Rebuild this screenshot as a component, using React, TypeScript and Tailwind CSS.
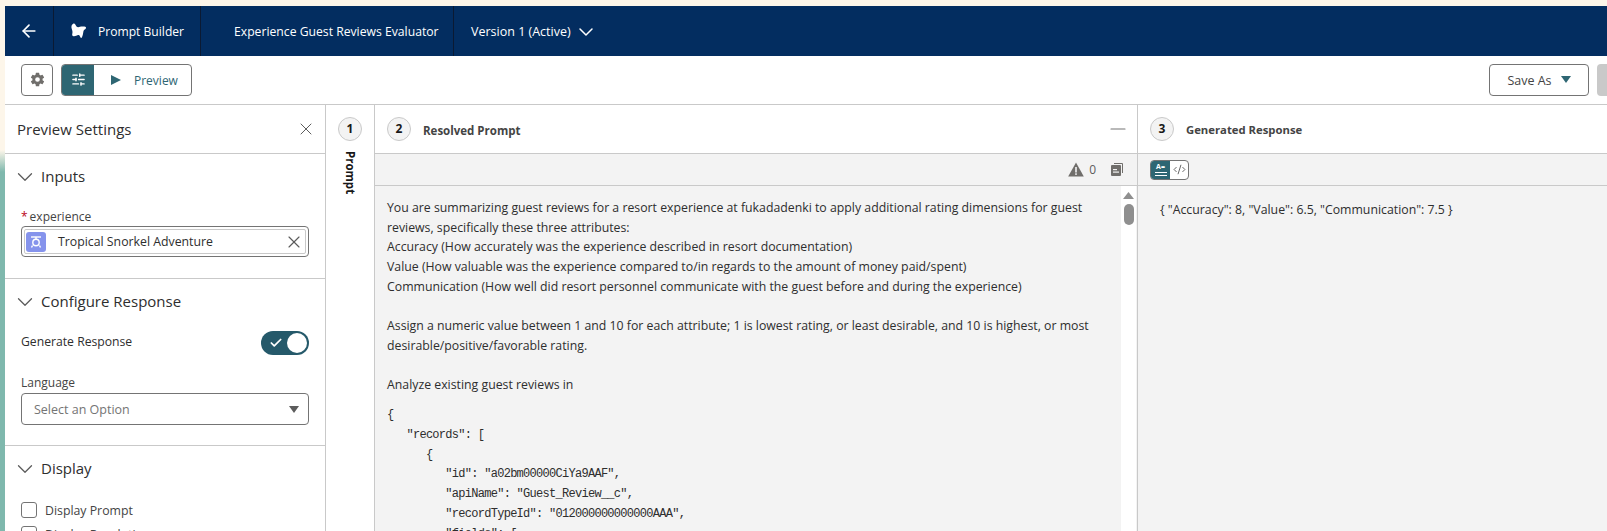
import { ArrowLeft, ChevronDown, Check, X, Minus, SlidersHorizontal, CodeXml } from "lucide-react";
import { IoSettingsSharp } from "react-icons/io5";

const FONT = "font-['Open_Sans','Noto_Sans',sans-serif]";

const PROMPT_TEXT = `You are summarizing guest reviews for a resort experience at fukadadenki to apply additional rating dimensions for guest
reviews, specifically these three attributes:
Accuracy (How accurately was the experience described in resort documentation)
Value (How valuable was the experience compared to/in regards to the amount of money paid/spent)
Communication (How well did resort personnel communicate with the guest before and during the experience)

Assign a numeric value between 1 and 10 for each attribute; 1 is lowest rating, or least desirable, and 10 is highest, or most
desirable/positive/favorable rating.

Analyze existing guest reviews in`;

const PROMPT_JSON = `{
   "records": [
      {
         "id": "a02bm00000CiYa9AAF",
         "apiName": "Guest_Review__c",
         "recordTypeId": "012000000000000AAA",
         "fields": [`;

function SectionHeader({ title }: { title: string }) {
  return (
    <div className="h-[47px] flex items-center pl-[7px] pb-[2px] gap-[3px]">
      <ChevronDown size={26} strokeWidth={1.2} className="text-[#5c5c5c]" />
      <span className="text-[15px] text-[#2e2e2e]">{title}</span>
    </div>
  );
}

function StepBadge({ n }: { n: number }) {
  return (
    <div className="w-6 h-6 rounded-full bg-[#f3f3f3] border border-[#c9c9c9] flex items-center justify-center text-[12px] font-bold text-[#181818] shrink-0">
      {n}
    </div>
  );
}

function CheckRow({ label }: { label: string }) {
  return (
    <div className="flex items-center gap-2 mb-2 h-4">
      <div className="w-4 h-4 rounded-[3px] border border-[#747474] bg-white shrink-0" />
      <span className="pt-[2px] text-[12.3px] text-[#444]">{label}</span>
    </div>
  );
}

function Logo() {
  return (
    <svg width="17" height="16" viewBox="0 0 17 16" fill="white">
      <path d="M3.5 .5 C5 0 5.5 2 6.5 3.5 C8 5 10 3.5 12 3.5 C13.5 3.2 16.5 3.5 16 5 C15.5 6.5 14 6.5 13.5 8 C13 10 13 13 11.5 15 C10.5 15.5 10 12.5 9 12 C7 11.5 5 14 3 13 C1.5 12.5 2.5 10.5 2.5 9 C2.5 7 1 5 1.5 3 C1.7 2 2.8 1 3.5 .5 Z" />
    </svg>
  );
}

function WarningIcon() {
  return (
    <svg width="16" height="15" viewBox="0 0 16 15">
      <path d="M8 .5 L15.8 14.5 L.2 14.5 Z" fill="#706e6b" />
      <rect x="7.2" y="5" width="1.6" height="5.5" fill="#f3f3f3" />
      <rect x="7.2" y="11.3" width="1.6" height="1.6" fill="#f3f3f3" />
    </svg>
  );
}

function CopyIcon() {
  return (
    <svg width="12" height="13" viewBox="0 0 12 13" fill="#706e6b">
      <path d="M3 0 H11 Q12 0 12 1 V10 H11 V1 H3 Z" />
      <path d="M0 3 Q0 2 1 2 H9 Q10 2 10 3 V12 Q10 13 9 13 H1 Q0 13 0 12 Z" />
      <rect x="2" y="6" width="4" height="1.2" fill="#f3f3f3" />
      <rect x="2" y="8.5" width="6" height="1.2" fill="#f3f3f3" />
    </svg>
  );
}

function PillIcon() {
  return (
    <div className="w-5 h-5 rounded-[3px] bg-[#8593ec] flex items-center justify-center shrink-0">
      <svg width="14" height="14" viewBox="0 0 14 14" fill="none" stroke="white" strokeWidth="1.4">
        <path d="M2 2 H12" />
        <path d="M7 2 V4" />
        <circle cx="7" cy="7.5" r="3.2" />
        <path d="M3.5 10.5 L2.5 12.5 M10.5 10.5 L11.5 12.5" />
      </svg>
    </div>
  );
}

export default function App() {
  return (
    <div className={`${FONT} h-[531px] w-[1607px] overflow-hidden pt-[6px] pl-[5px] flex flex-col bg-[linear-gradient(180deg,#fdf6ea_0px,#fdf6ea_150px,#7fb8ad_172px,#7fb8ad_531px)]`}>
      {/* app header */}
      <header className="h-[50px] shrink-0 bg-[#032d60] flex items-center text-white text-[12.5px]">
        <div className="w-[49px] h-full border-r border-[#0b1a33] flex items-center justify-center">
          <ArrowLeft size={20} strokeWidth={2} />
        </div>
        <div className="w-[147px] h-full border-r border-[#0b1a33] flex items-center pl-4 gap-[11px]">
          <Logo />
          <span className="pt-[2px] text-[12.1px]">Prompt Builder</span>
        </div>
        <div className="w-[253px] h-full border-r border-[#0b1a33] flex items-center pl-[33px]">
          <span className="pt-[2px] text-[12.2px]">Experience Guest Reviews Evaluator</span>
        </div>
        <div className="flex items-center pl-[17px] gap-[3px]">
          <span className="pt-[2px]">Version 1 (Active)</span>
          <ChevronDown size={24} strokeWidth={1.5} className="mt-[2px]" />
        </div>
      </header>

      {/* toolbar */}
      <div className="h-[49px] shrink-0 bg-white border-b border-[#c9c9c9] flex items-center pl-4 pb-px">
        <button className="w-8 h-8 rounded-[4px] border border-[#747474] flex items-center justify-center">
          <IoSettingsSharp size={15} className="text-[#706e6b]" />
        </button>
        <div className="ml-2 w-[131px] h-8 rounded-[4px] border border-[#747474] flex overflow-hidden">
          <div className="w-8 bg-[#2e6673] flex items-center justify-center">
            <SlidersHorizontal size={15} strokeWidth={2.25} className="text-white" />
          </div>
          <div className="flex-1 flex items-center pl-[17px] gap-[13px] text-[12px] text-[#2e6673]">
            <svg width="10" height="10" viewBox="0 0 10 10" fill="#2e6673"><path d="M0 0 L10 5 L0 10 Z" /></svg>
            <span className="pt-[3px]">Preview</span>
          </div>
        </div>
        <div className="ml-auto flex items-center gap-2">
          <button className="w-[100px] h-8 rounded-[4px] border border-[#747474] flex items-center justify-center gap-[9px] text-[12.5px] text-[#444]">
            <span className="pt-[3px]">Save As</span>
            <svg width="10" height="7" viewBox="0 0 10 7" fill="#2e6673"><path d="M0 0 H10 L5 7 Z" /></svg>
          </button>
          <div className="w-[10px] h-8 rounded-l-[4px] bg-[#c9c9c9]" />
        </div>
      </div>

      <div className="flex-1 min-h-0 flex bg-white">
        {/* preview settings */}
        <aside className="w-[321px] shrink-0 border-r border-[#c9c9c9] overflow-hidden">
          <div className="h-[49px] border-b border-[#c9c9c9] flex items-center justify-between pl-3 pr-[9px]">
            <span className="text-[15px] text-[#2e2e2e]">Preview Settings</span>
            <X size={20} strokeWidth={1.2} className="text-[#5c5c5c]" />
          </div>

          <section className="h-[125px] border-b border-[#c9c9c9]">
            <SectionHeader title="Inputs" />
            <div className="px-4">
              <div className="mt-[7px] h-4 flex items-center pt-[2px] text-[12px] text-[#444]">
                <span className="text-[#ba0517] mr-[2px]">*</span>experience
              </div>
              <div className="mt-[2px] h-[31px] rounded-[4px] border border-[#747474] p-[2px]">
                <div className="h-full border border-[#c9c9c9] rounded-[2px] flex items-center pl-[1px] pr-[1px]">
                  <PillIcon />
                  <span className="ml-3 pt-[2px] text-[12.3px] text-[#2e2e2e] flex-1">Tropical Snorkel Adventure</span>
                  <X size={20} strokeWidth={1.4} className="text-[#5c5c5c]" />
                </div>
              </div>
            </div>
          </section>

          <section className="h-[167px] border-b border-[#c9c9c9]">
            <SectionHeader title="Configure Response" />
            <div className="px-4">
              <div className="mt-[5px] h-6 flex items-center justify-between text-[12.2px] text-[#2e2e2e]">
                <span className="pb-[2px]">Generate Response</span>
                <div className="w-12 h-6 rounded-full bg-[#25596a] flex items-center justify-between pl-[8px] pr-[2px]">
                  <Check size={14} strokeWidth={3} className="text-white" />
                  <div className="w-5 h-5 rounded-full bg-white" />
                </div>
              </div>
              <div className="mt-5 h-4 flex items-center text-[12px] text-[#444]">Language</div>
              <div className="mt-[2px] h-8 rounded-[4px] border border-[#747474] flex items-center justify-between pl-3 pr-[9px] text-[12.5px] text-[#747474]">
                <span className="pt-[2px]">Select an Option</span>
                <svg width="10" height="7" viewBox="0 0 10 7" fill="#5c5c5c"><path d="M0 0 H10 L5 7 Z" /></svg>
              </div>
            </div>
          </section>

          <section>
            <SectionHeader title="Display" />
            <div className="px-4 pt-[9px]">
              <CheckRow label="Display Prompt" />
              <CheckRow label="Display Resolution" />
            </div>
          </section>
        </aside>

        {/* prompt rail */}
        <div className="w-[49px] shrink-0 border-r border-[#c9c9c9] flex flex-col items-center pt-3">
          <StepBadge n={1} />
          <div className="mt-[10px] [writing-mode:vertical-rl] text-[11.5px] font-bold text-[#181818]">Prompt</div>
        </div>

        {/* resolved prompt */}
        <div className="w-[763px] shrink-0 border-r border-[#c9c9c9] flex flex-col min-h-0">
          <div className="h-[49px] shrink-0 border-b border-[#c9c9c9] flex items-center pl-3 pr-[7px]">
            <StepBadge n={2} />
            <span className="ml-3 pt-[3px] text-[11.5px] font-bold text-[#444]">Resolved Prompt</span>
            <Minus size={24} strokeWidth={1.1} className="ml-auto text-[#747474]" />
          </div>
          <div className="h-[32px] shrink-0 border-b border-[#c9c9c9] bg-[#f3f3f3] flex items-center justify-end pr-[14px] text-[12px] text-[#5c5c5c]">
            <WarningIcon />
            <span className="ml-[5px]">0</span>
            <span className="ml-[15px]"><CopyIcon /></span>
          </div>
          <div className="flex-1 min-h-0 bg-[#f3f3f3] flex overflow-hidden">
            <div className="flex-1 pl-3 pt-[12px] text-[12.3px] leading-[19.7px] text-[#2e2e2e]">
              <div className="whitespace-pre-line">{PROMPT_TEXT}</div>
              <pre className="mt-[11px] font-['Liberation_Mono',monospace] text-[12px] leading-[19.8px] tracking-[-0.72px] text-[#2e2e2e]">{PROMPT_JSON}</pre>
            </div>
            <div className="w-[15px] mr-px shrink-0 bg-white flex flex-col items-center pt-[6px]">
              <svg width="11" height="7" viewBox="0 0 11 7" fill="#8f8f8f"><path d="M5.5 0 L11 7 H0 Z" /></svg>
              <div className="mt-[5px] w-[10px] h-[21px] rounded-full bg-[#8f8f8f]" />
            </div>
          </div>
        </div>

        {/* generated response */}
        <div className="flex-1 min-w-0 flex flex-col">
          <div className="h-[49px] shrink-0 border-b border-[#c9c9c9] flex items-center pl-3">
            <StepBadge n={3} />
            <span className="ml-3 pt-[3px] text-[11.3px] font-bold text-[#444]">Generated Response</span>
          </div>
          <div className="h-[32px] shrink-0 border-b border-[#c9c9c9] bg-[#f3f3f3] flex items-center pl-3">
            <div className="w-[39px] h-[20px] rounded-[4px] border border-[#747474] bg-white flex overflow-hidden">
              <div className="w-[19px] bg-[#2e6673] flex flex-col items-center justify-center gap-[1.5px]">
                <span className="text-[7px] leading-[7px] font-bold text-white">A=</span>
                <div className="w-[12px] h-[1.5px] bg-white" />
                <div className="w-[12px] h-[1.5px] bg-white" />
              </div>
              <div className="flex-1 flex items-center justify-center">
                <CodeXml size={13} strokeWidth={1.5} className="text-[#444]" />
              </div>
            </div>
          </div>
          <div className="flex-1 bg-[#f3f3f3] pl-[22px] pt-[14px] text-[12.3px] leading-[19.6px] text-[#2e2e2e]">
            {'{ "Accuracy": 8, "Value": 6.5, "Communication": 7.5 }'}
          </div>
        </div>
      </div>
    </div>
  );
}
